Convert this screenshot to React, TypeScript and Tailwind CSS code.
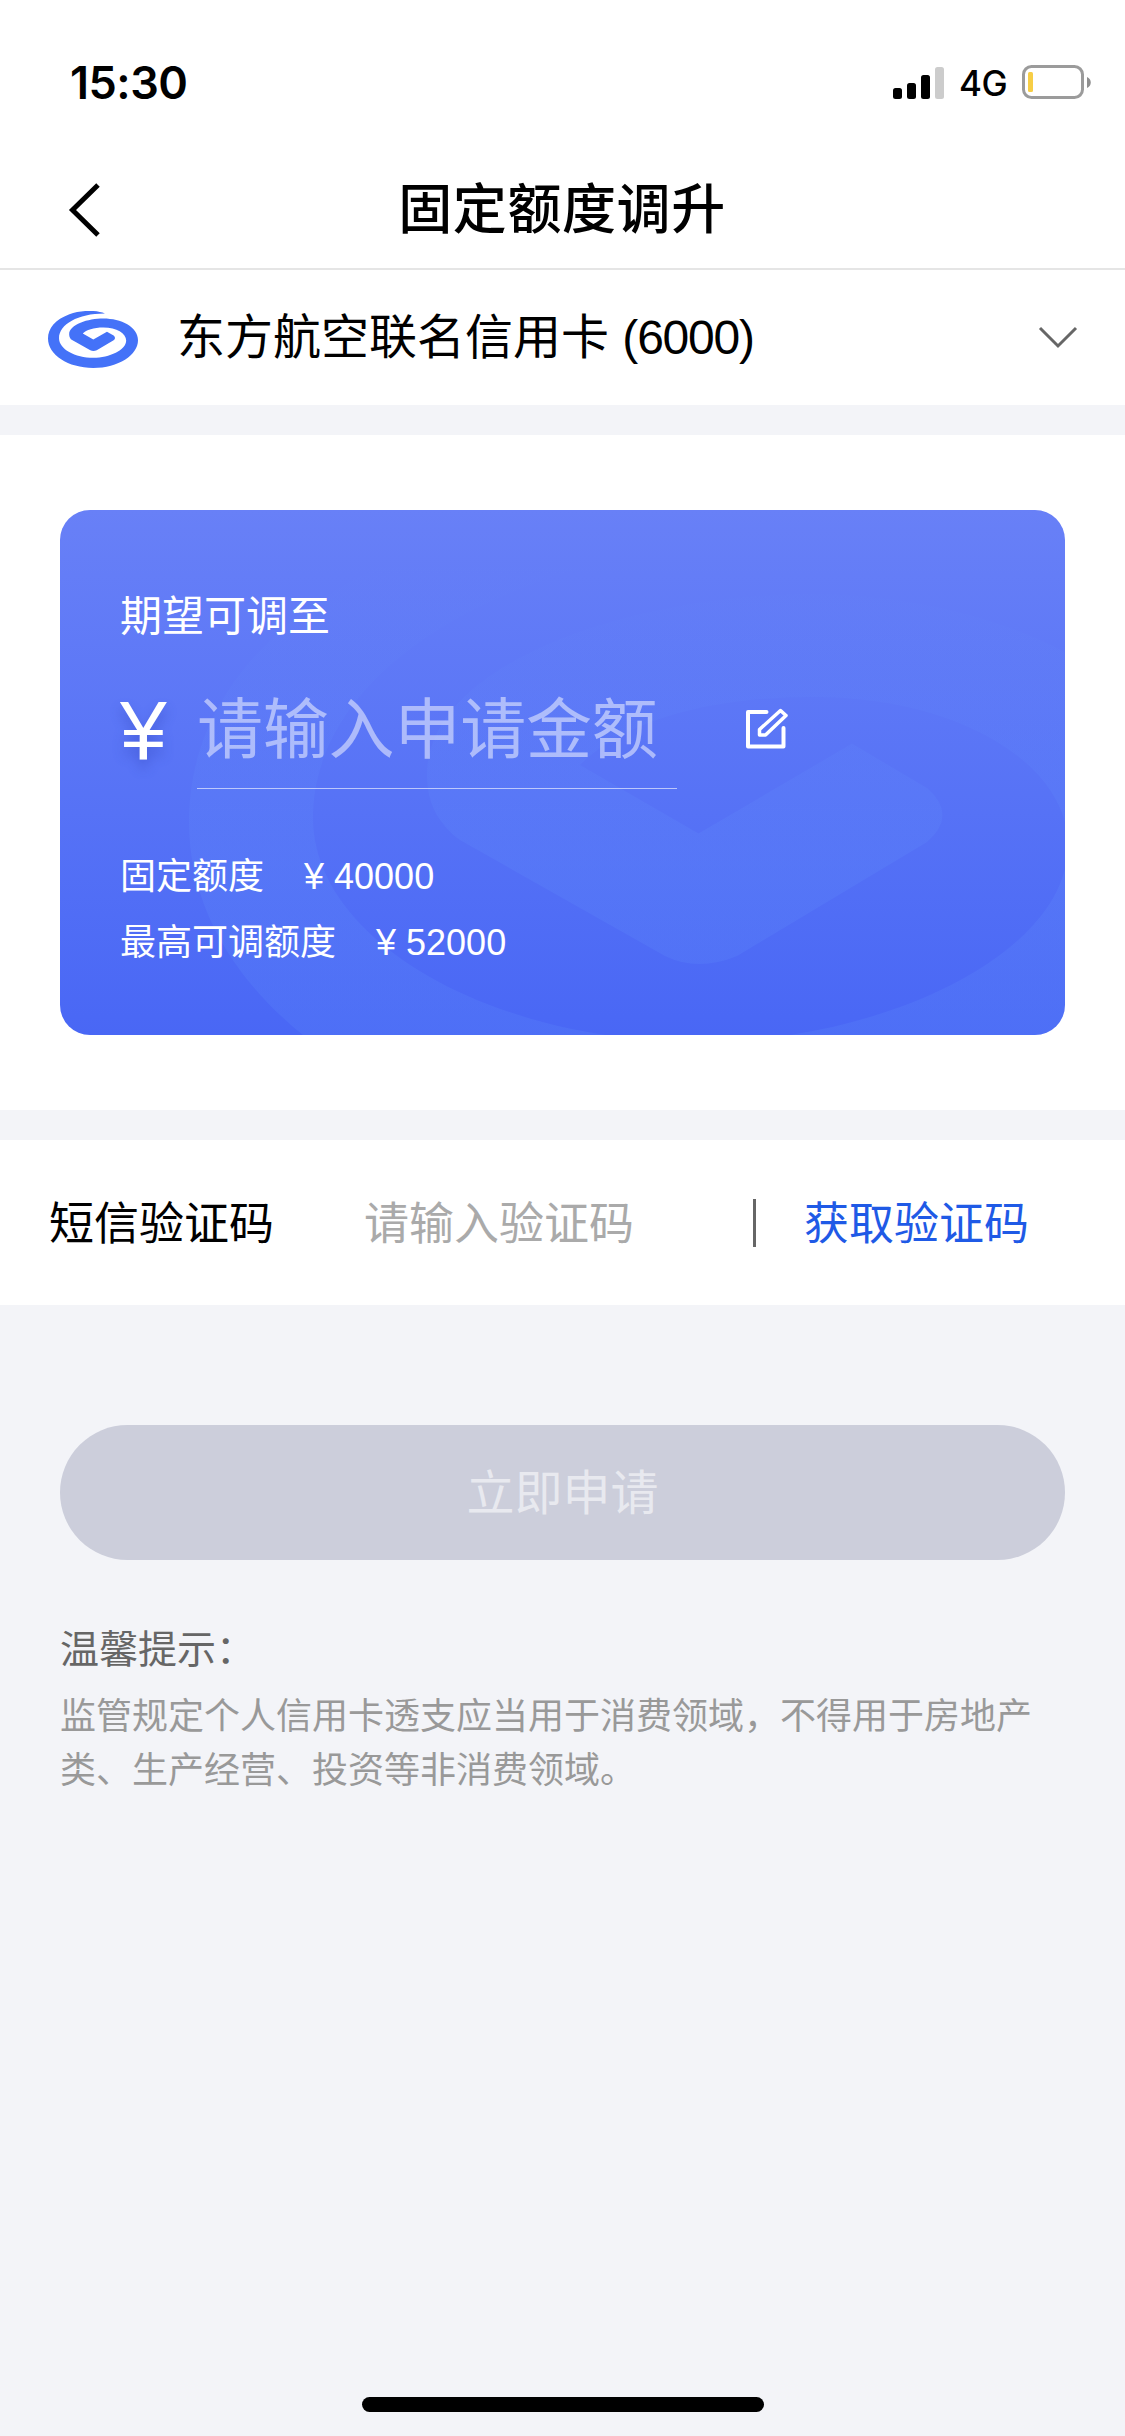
const SWIRL =
  'M830 537C740 495 560 495 430 545C270 605 189 705 189 822C189 1010 415 1157 698 1157C980 1157 1201 1010 1201 841C1201 690 1010 594 811 594C640 594 427 660 427 775C427 805 440 825 460 840L665 956Q698 972 737 956L927 842Q958 815 927 788L852 743.6L698.5 833.6L580 765C620 725 700 697 813 697C960 697 1068 765 1068 845C1068 955 880 1042 700 1042C490 1042 313 940 313 818C313 660 530 535 830 537Z';

function StatusBar() {
  return (
    <div className="flex h-[132px] items-center justify-between pt-8 pr-[34px] pl-[70px] font-['Inter',sans-serif] text-black">
      <span className="text-[45px] leading-none font-semibold tracking-[-0.5px]">15:30</span>
      <div className="flex items-center">
        <svg width="51" height="33" viewBox="0 0 51 33" fill="#000">
          <rect x="0" y="22" width="9" height="11" rx="2.5" />
          <rect x="14" y="17" width="9" height="16" rx="2.5" />
          <rect x="28" y="9" width="9" height="24" rx="2.5" />
          <rect x="42" y="1" width="9" height="32" rx="2.5" fill="#cccccc" />
        </svg>
        <span className="ml-[15px] w-[63px] pt-[2px] text-[35px] leading-none font-medium tracking-[-0.5px]">4G</span>
        <svg width="69" height="34" viewBox="0 0 69 34">
          <rect x="1.5" y="1.5" width="59" height="31" rx="8" fill="none" stroke="#9b9b9b" strokeWidth="3" />
          <rect x="6" y="7" width="5" height="20" rx="1.5" fill="#f7ce46" />
          <path d="M65 12C70 14 70 21 65 23Z" fill="#8f8f8f" />
        </svg>
      </div>
    </div>
  );
}

function NavBar() {
  return (
    <header className="flex h-[138px] items-center border-b-2 border-[#e5e5e5] bg-white pt-5">
      <svg className="ml-[66px] w-[34px]" height="54" viewBox="0 0 34 54" fill="none" stroke="#000" strokeWidth="5">
        <path d="M32 2L6.500 27L32 52" />
      </svg>
      <h1 className="mr-[101px] flex-1 text-center text-[54px] leading-none font-medium tracking-[0.6px]">固定额度调升</h1>
    </header>
  );
}

function CardPicker() {
  return (
    <section className="flex h-[135px] items-center bg-white pr-[47px] pl-[48px]">
      <svg className="mt-1" width="90" height="57" viewBox="189 508 1012 650" preserveAspectRatio="none" fill="#4472f8">
        <path d={SWIRL} />
      </svg>
      <span className="ml-[39px] flex-1 pt-px text-[48px] leading-none whitespace-nowrap">
        东方航空联名信用卡 <span className="tracking-[-1.2px]">(6000)</span>
      </span>
      <svg width="40" height="24" viewBox="0 0 40 24" fill="none" stroke="#666" strokeWidth="3">
        <path d="M2 2L20 20L38 2" />
      </svg>
    </section>
  );
}

function LimitRow({ label, amount }: { label: string; amount: string }) {
  return (
    <div className="flex h-[66px] items-center gap-10 text-[36px] leading-none">
      <span>{label}</span>
      <span>¥ {amount}</span>
    </div>
  );
}

function AmountCard() {
  return (
    <section className="bg-white px-[60px] py-[75px]">
      <div className="relative h-[525px] overflow-hidden rounded-[30px] bg-gradient-to-b from-[#6880f7] to-[#4967f5] text-white">
        <svg className="absolute inset-0" width="1005" height="525" viewBox="60 510 1005 525">
          <defs>
            <linearGradient id="fade" gradientUnits="userSpaceOnUse" x1="0" y1="560" x2="0" y2="860">
              <stop offset="0" stopColor="#6aa0ff" stopOpacity="0" />
              <stop offset="1" stopColor="#6aa0ff" stopOpacity="0.14" />
            </linearGradient>
          </defs>
          <path d={SWIRL} fill="url(#fade)" />
        </svg>
        <div className="relative px-[60px] pt-[77px]">
          <p className="text-[42px] leading-[60px]">期望可调至</p>
          <div className="mt-[22px] flex h-[120px] items-center">
            <span className="w-[77px] pt-[2px] text-[84px] leading-none [text-shadow:0_8px_12px_rgba(50,70,190,0.45)]">¥</span>
            <div className="h-[120px] w-[480px] border-b border-white/60 text-[66px] leading-[122px] tracking-[-0.2px] whitespace-nowrap text-white/50">
              请输入申请金额
            </div>
            <svg className="ml-[69px]" width="42" height="42" viewBox="0 0 42 42" fill="none" stroke="#fff" strokeWidth="4" strokeLinejoin="round" strokeLinecap="round">
              <path d="M20.500 4H2V38.500H37.500V20" />
              <path d="M34.500 2.500L13.500 21.500V27H19.500L40 7.500Z" strokeWidth="3.500" />
            </svg>
          </div>
          <div className="mt-[55px]">
            <LimitRow label="固定额度" amount="40000" />
            <LimitRow label="最高可调额度" amount="52000" />
          </div>
        </div>
      </div>
    </section>
  );
}

function SmsRow() {
  return (
    <section className="flex h-[165px] items-center bg-white pl-[49px] text-[45px] leading-none whitespace-nowrap">
      <span className="w-[315px] pt-[3px]">短信验证码</span>
      <span className="w-[389px] pt-[3px] text-[#aaaaaa]">请输入验证码</span>
      <span className="h-[48px] w-[3px] bg-[#666666]" />
      <span className="ml-[48px] pt-[3px] text-[#1f5ae6]">获取验证码</span>
    </section>
  );
}

export default function App() {
  return (
    <div className="flex h-[2436px] w-[1125px] flex-col bg-[#f3f4f8] font-['Liberation_Sans','Noto_Sans_CJK_SC',sans-serif] text-black">
      <div className="bg-white">
        <StatusBar />
        <NavBar />
        <CardPicker />
      </div>
      <div className="mt-[30px]">
        <AmountCard />
      </div>
      <div className="mt-[30px]">
        <SmsRow />
      </div>
      <div className="mt-[120px] px-[60px]">
        <button className="h-[135px] w-full rounded-full bg-[#cccedb] pt-[2px] text-[48px] leading-none text-[#e8e9ef]">立即申请</button>
        <p className="mt-[62px] text-[39px] leading-[56px] text-[#666666]">温馨提示：</p>
        <p className="mt-[12px] text-[36px] leading-[54px] text-[#999999]">
          监管规定个人信用卡透支应当用于消费领域，不得用于房地产类、生产经营、投资等非消费领域。
        </p>
      </div>
      <div className="mt-auto mb-6 h-[15px] w-[402px] self-center rounded-full bg-black" />
    </div>
  );
}
